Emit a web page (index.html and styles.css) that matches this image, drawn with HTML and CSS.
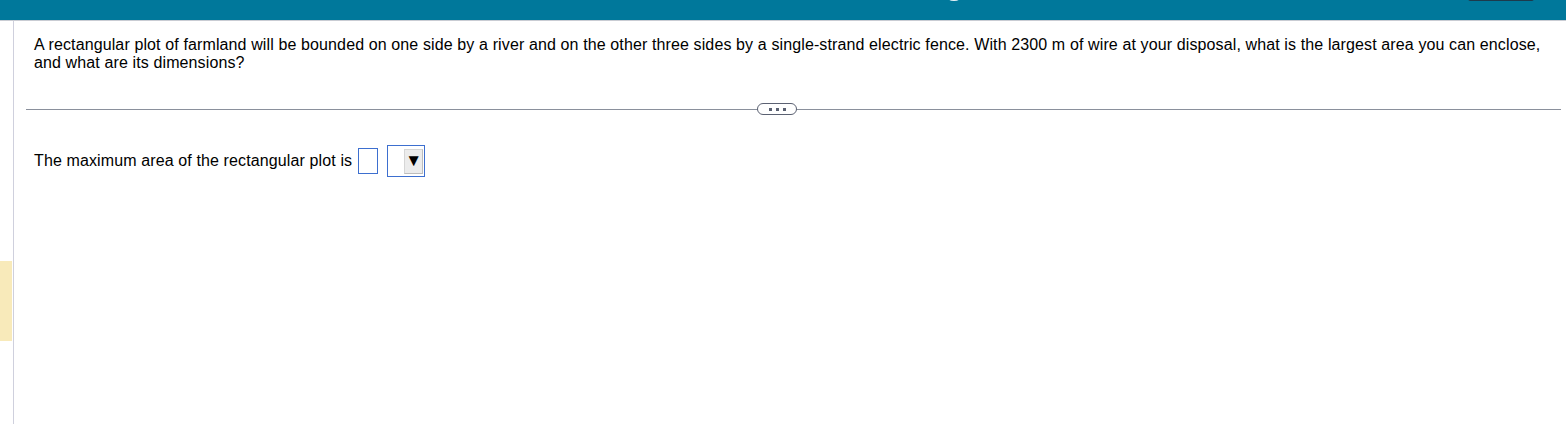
FILE: index.html
```html
<!DOCTYPE html>
<html>
<head>
<meta charset="utf-8">
<link rel="stylesheet" href="styles.css">
</head>
<body>
<header class="topbar">
  <span class="top-dot"></span>
  <span class="top-tab"></span>
</header>
<div class="page">
  <aside class="gutter"><div class="marker"></div></aside>
  <main class="content">
    <p class="question">A rectangular plot of farmland will be bounded on one side by a river and on the other three sides by a single-strand electric fence. With 2300 m of wire at your disposal, what is the largest area you can enclose, and what are its dimensions?</p>
    <div class="divider">
      <span class="pill"><i></i><i></i><i></i></span>
    </div>
    <div class="answer">
      <span class="label">The maximum area of the rectangular plot is</span>
      <span class="box"></span>
      <span class="select"><span class="arrow">&#9660;</span></span>
    </div>
  </main>
</div>
</body>
</html>
```
FILE: styles.css
```css
html, body {
  margin: 0;
  padding: 0;
  background: #ffffff;
  font-family: "Liberation Sans", Arial, sans-serif;
  color: #000;
}
.topbar {
  position: relative;
  height: 20px;
  background: #00789b;
  border-bottom: 1px solid #c9ccd3;
  overflow: hidden;
}
.top-dot {
  position: absolute;
  left: 949px;
  top: -3px;
  width: 10px;
  height: 4px;
  border-radius: 50%;
  background: #e8f3f7;
}
.top-tab {
  position: absolute;
  left: 1468px;
  top: -4px;
  width: 66px;
  height: 5px;
  border-radius: 3px;
  background: #1d3a4c;
}
.page {
  display: flex;
  height: 403px;
}
.gutter {
  width: 13px;
  border-right: 1px solid #cfd0dd;
  flex: none;
}
.marker {
  margin-top: 240px;
  width: 12px;
  height: 80px;
  background: #f8eaba;
}
.content {
  flex: 1;
  margin-left: 12px;
  margin-right: 5px;
}
.question {
  margin: 15px 0 0 0;
  padding-left: 8px;
  font-size: 16px;
  line-height: 18px;
  letter-spacing: 0.12px;
}
.divider {
  position: relative;
  margin-top: 37px;
  height: 1px;
  background: #8a909c;
}
.pill {
  position: absolute;
  left: 731px;
  top: -6px;
  width: 38px;
  height: 10px;
  border: 1px solid #5b6172;
  border-radius: 6px;
  background: #fff;
  display: flex;
  align-items: center;
  justify-content: center;
  gap: 4px;
}
.pill i {
  display: block;
  width: 3px;
  height: 3px;
  background: #5b6172;
}
.answer {
  display: flex;
  align-items: center;
  margin-top: 35px;
  padding-left: 8px;
  font-size: 16px;
  line-height: 18px;
  letter-spacing: 0.12px;
}
.label {
  margin-right: 6px;
}
.box {
  width: 18px;
  height: 24px;
  border: 1px solid #3d6fcf;
  margin-right: 9px;
}
.select {
  width: 35px;
  height: 30px;
  border: 1px solid #3d6fcf;
  display: flex;
  justify-content: flex-end;
  align-items: center;
  padding-right: 1px;
}
.arrow {
  width: 17px;
  height: 23px;
  background: #ececec;
  border: 1px solid #d6d6d6;
  border-right-color: #bdbdbd;
  border-bottom-color: #bdbdbd;
  font-size: 17px;
  line-height: 21px;
  text-align: center;
  letter-spacing: 0;
  color: #000;
}
```
